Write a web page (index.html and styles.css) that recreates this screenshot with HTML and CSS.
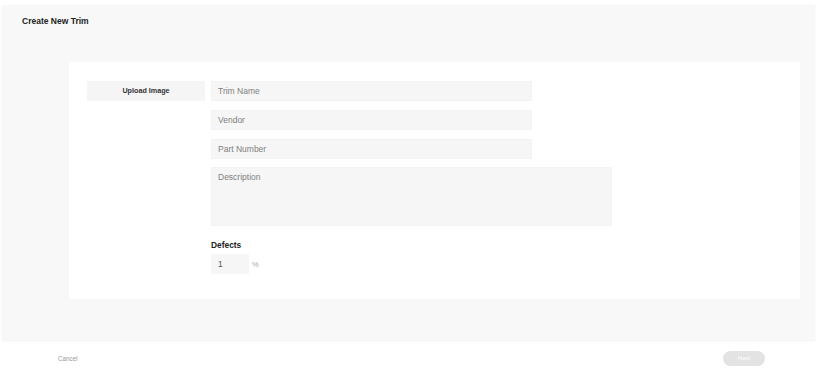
FILE: index.html
```html
<!DOCTYPE html>
<html lang="en">
<head>
  <meta charset="UTF-8">
  <title>Create New Trim</title>
  <link rel="stylesheet" href="styles.css">
</head>
<body>
  <div class="panel">
    <h1 class="title">Create New Trim</h1>
    <div class="card">
      <div class="upload">Upload Image</div>
      <div class="fields">
        <div class="field">Trim Name</div>
        <div class="field">Vendor</div>
        <div class="field">Part Number</div>
        <div class="field desc">Description</div>
        <div class="label">Defects</div>
        <div class="defects">
          <div class="num">1</div>
          <span class="pct">%</span>
        </div>
      </div>
    </div>
  </div>
  <div class="footer">
    <a href="javascript:;" class="cancel">Cancel</a>
    <a href="javascript:;" class="next">Next</a>
  </div>
</body>
</html>
```
FILE: styles.css
```css
body {
  margin: 0;
  font-family: "Liberation Sans", Arial, sans-serif;
  background: #fff;
}
.panel {
  margin: 5px 6px 0 2px;
  height: 335px;
  background: #f8f8f8;
  box-shadow: 0 1px 2px rgba(0, 0, 0, .06);
  padding: 0 15px 0 20px;
  box-sizing: border-box;
  display: flex;
  flex-direction: column;
}
.title {
  margin: 0;
  padding-top: 11px;
  height: 46px;
  box-sizing: border-box;
  font-size: 8.5px;
  font-weight: bold;
  color: #222;
  line-height: 10px;
}
.card {
  margin: 11px 0 0 47px;
  background: #fff;
  height: 237px;
  box-sizing: border-box;
  padding: 19px 0 0 18px;
  display: flex;
  gap: 6px;
}
.upload {
  width: 118px;
  height: 20px;
  background: #f5f5f5;
  font-size: 7.2px;
  font-weight: bold;
  color: #333;
  line-height: 20px;
  text-align: center;
}
.fields {
  display: flex;
  flex-direction: column;
  gap: 9px;
}
.field {
  width: 321px;
  height: 20px;
  background: #f6f6f6;
  border: 1px solid #f3f3f3;
  box-sizing: border-box;
  padding-left: 6px;
  font-size: 8.5px;
  color: #808080;
  line-height: 18px;
}
.field.desc {
  width: 401px;
  height: 59px;
  margin-top: -1px;
}
.label {
  margin-top: 5px;
  font-size: 8.4px;
  font-weight: bold;
  color: #222;
  line-height: 10px;
}
.defects {
  margin-top: -5px;
  display: flex;
  align-items: center;
  gap: 3px;
}
.num {
  width: 38px;
  height: 20px;
  background: #f6f6f6;
  box-sizing: border-box;
  padding-left: 7px;
  font-size: 8.5px;
  color: #555;
  line-height: 20px;
}
.pct {
  font-size: 7.5px;
  color: #aaa;
}
.footer {
  height: 33px;
  box-sizing: border-box;
  padding: 4px 56px 0 58px;
  display: flex;
  align-items: center;
  justify-content: space-between;
}
.cancel {
  font-size: 6.3px;
  color: #999;
  text-decoration: none;
}
.next {
  width: 42px;
  height: 15px;
  border-radius: 8px;
  background: #e3e3e3;
  color: #fff;
  font-size: 6px;
  line-height: 15px;
  text-align: center;
  text-decoration: none;
}
```
